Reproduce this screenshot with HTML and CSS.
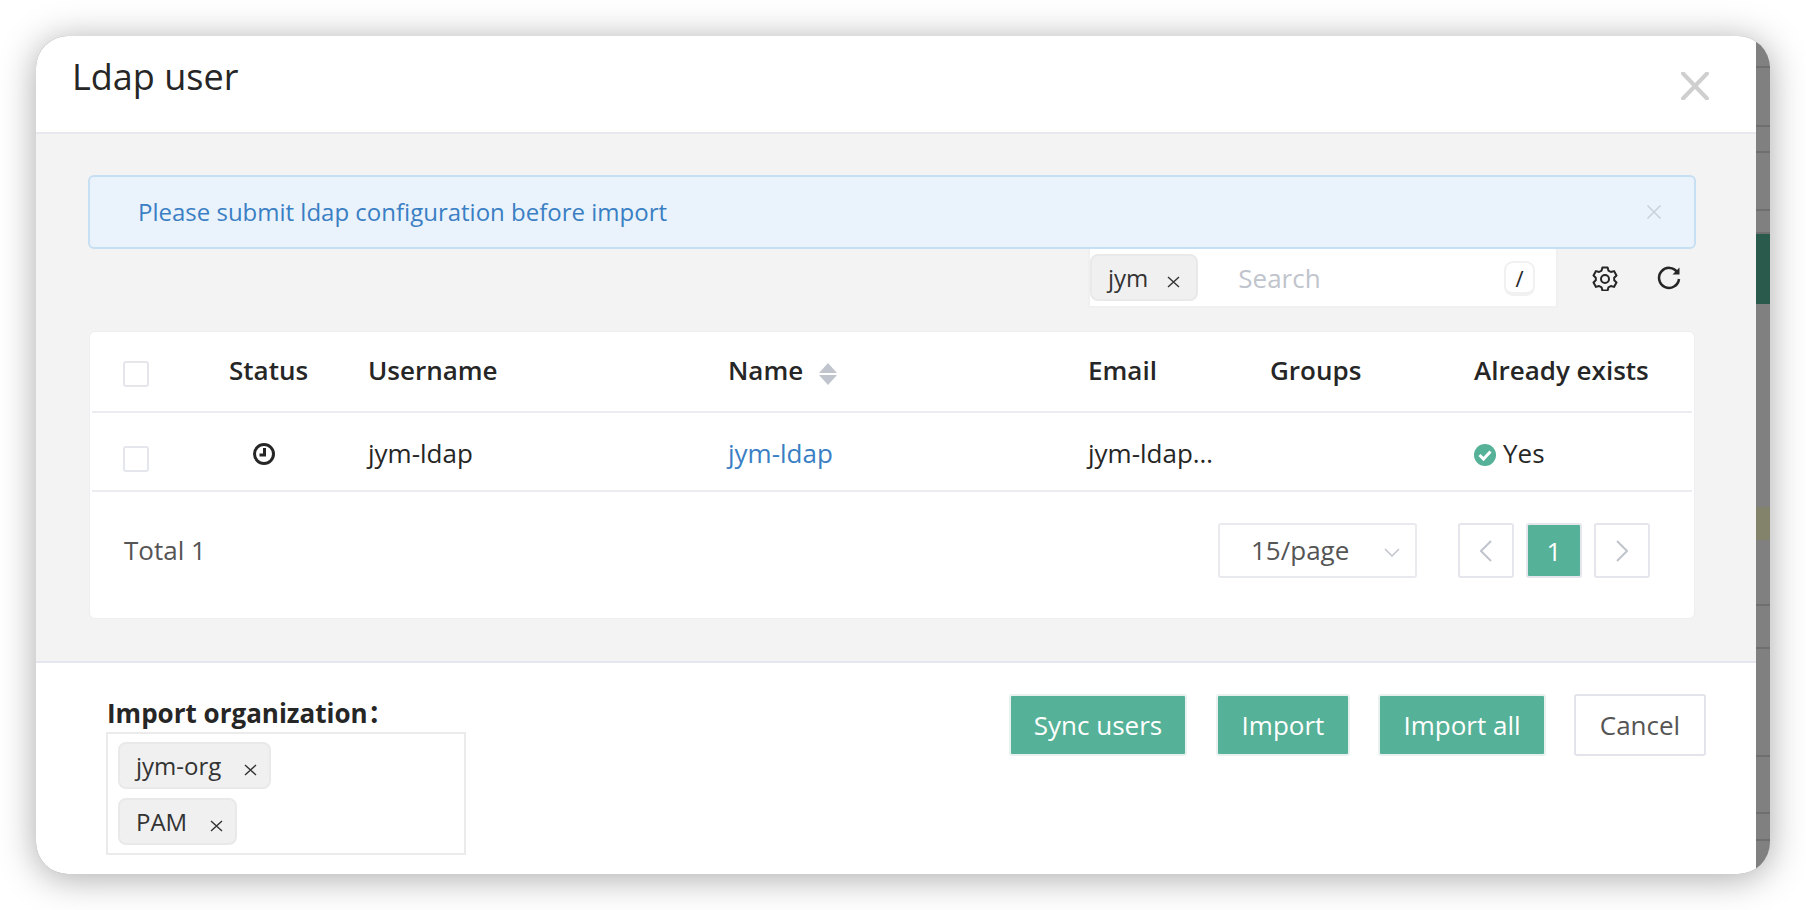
FILE: index.html
```html
<!DOCTYPE html>
<html lang="en">
<head>
    <meta charset="UTF-8">
    <title>Ldap user</title>
    <link rel="stylesheet" href="styles.css">
</head>
<body>
<div class="window">
    <div class="modal">
        <div class="modal-head">
            <h1 class="modal-title">Ldap user</h1>
            <svg class="modal-close" width="28" height="28" viewBox="0 0 28 28"><path d="M2 1.5 L26 26.5 M26 1.5 L2 26.5"/></svg>
        </div>
        <div class="modal-body">
            <div class="alert">
                <span class="alert-text">Please submit ldap configuration before import</span>
                <svg class="alert-close" width="16" height="16" viewBox="0 0 16 16"><path d="M1.500 1.500 L14.500 14.500 M14.500 1.500 L1.500 14.500"/></svg>
            </div>
            <div class="toolbar">
                <div class="search">
                    <span class="tag tag-search">jym<svg class="tag-x" width="13" height="12" viewBox="0 0 13 12"><path d="M1 1 L12 11 M12 1 L1 11"/></svg></span>
                    <span class="search-hint">Search</span>
                    <span class="search-key">/</span>
                </div>
                <!-- 设置 -->
                <svg class="tool-icon tool-gear" width="26" height="26" viewBox="0 0 26 26"><path d="M10.400 2.500 H15.600 L16.400 5.600 L18.900 7 L22 6.100 L24.500 10.500 L22.200 12.700 V15.300 L24.500 17.500 L22 21.900 L18.900 21 L16.400 22.400 L15.600 25.500 H10.400 L9.600 22.400 L7.100 21 L4 21.900 L1.500 17.500 L3.800 15.300 V12.700 L1.500 10.500 L4 6.100 L7.100 7 L9.600 5.600 Z"/><circle cx="13" cy="14" r="4"/></svg>
                <!-- 刷新 -->
                <svg class="tool-icon tool-refresh" width="26" height="26" viewBox="0 0 26 26"><path d="M21.500 7.500 A10 10 0 1 0 23 14"/><path class="arrow" d="M23.500 2.500 V9.500 H16.500 Z"/></svg>
            </div>
            <div class="card">
                <div class="table">
                    <div class="row row-head">
                        <div class="cell"><span class="checkbox"></span></div>
                        <div class="cell">Status</div>
                        <div class="cell">Username</div>
                        <div class="cell">Name
                            <svg class="sort" width="20" height="22" viewBox="0 0 20 22"><path d="M10 0 L19 10 H1 Z M1 12 H19 L10 22 Z"/></svg>
                        </div>
                        <div class="cell">Email</div>
                        <div class="cell">Groups</div>
                        <div class="cell">Already exists</div>
                    </div>
                    <div class="row row-data">
                        <div class="cell"><span class="checkbox"></span></div>
                        <div class="cell">
                            <svg class="clock" width="24" height="24" viewBox="0 0 24 24"><circle cx="12" cy="12" r="9.500"/><path d="M12.500 6 V13 H7.500"/></svg>
                        </div>
                        <div class="cell">jym-ldap</div>
                        <div class="cell"><a class="link" href="#">jym-ldap</a></div>
                        <div class="cell">jym-ldap…</div>
                        <div class="cell"></div>
                        <div class="cell">
                            <svg class="yes" width="22" height="22" viewBox="0 0 22 22"><circle cx="11" cy="11" r="11"/><path d="M5.500 11 L9.500 15 L16.500 7.500"/></svg>Yes
                        </div>
                    </div>
                </div>
                <div class="pager">
                    <span class="total">Total 1</span>
                    <div class="select">15/page
                        <svg class="chevron" width="16" height="9" viewBox="0 0 16 9"><path d="M1 1 L8 8 L15 1"/></svg>
                    </div>
                    <span class="page-btn"><svg width="12" height="22" viewBox="0 0 12 22"><path d="M11 1 L1 11 L11 21"/></svg></span>
                    <span class="page-btn page-on">1</span>
                    <span class="page-btn"><svg width="12" height="22" viewBox="0 0 12 22"><path d="M1 1 L11 11 L1 21"/></svg></span>
                </div>
            </div>
        </div>
        <div class="modal-foot">
            <div class="org">
                <div class="org-label">Import organization：</div>
                <div class="org-box">
                    <span class="tag">jym-org<svg class="tag-x" width="13" height="12" viewBox="0 0 13 12"><path d="M1 1 L12 11 M12 1 L1 11"/></svg></span>
                    <span class="tag">PAM<svg class="tag-x" width="13" height="12" viewBox="0 0 13 12"><path d="M1 1 L12 11 M12 1 L1 11"/></svg></span>
                </div>
            </div>
            <div class="actions">
                <button class="btn btn-green btn-sync">Sync users</button>
                <button class="btn btn-green btn-import">Import</button>
                <button class="btn btn-green btn-all">Import all</button>
                <button class="btn btn-cancel">Cancel</button>
            </div>
        </div>
    </div>
    <!-- 弹窗后面露出的页面 -->
    <div class="behind">
        <div class="band line b1"></div>
        <div class="band line b2"></div>
        <div class="band line b3"></div>
        <div class="band line b4"></div>
        <div class="band line b4b"></div>
        <div class="band green"></div>
        <div class="band b5"></div>
        <div class="band olive"></div>
        <div class="band line b6"></div>
        <div class="band line b7"></div>
        <div class="band line b8"></div>
        <div class="band line b9"></div>
        <div class="band line b10"></div>
    </div>
</div>
</body>
</html>
```

FILE: styles.css
```css
*{
    margin: 0;
    padding: 0;
    box-sizing: border-box;
}
body{
    width: 1806px;
    height: 910px;
    padding: 36px;
    overflow: hidden;
    background: #fff;
    font-family: "Open Sans", "Noto Sans CJK SC", "Liberation Sans", sans-serif;
    font-size: 26px;
    color: #262626;
}
/*窗口*/
.window{
    display: flex;
    width: 1734px;
    height: 838px;
    border-radius: 32px;
    overflow: hidden;
    box-shadow: 0 4px 36px rgba(0,0,0,.34);
    background: #808080;
}
.modal{
    display: flex;
    flex-direction: column;
    width: 1720px;
    background: #fff;
}
/*头部*/
.modal-head{
    display: flex;
    justify-content: space-between;
    height: 98px;
    padding: 18px 47px 0 36px;
    border-bottom: 2px solid #e7e9ee;
}
.modal-title{
    font-size: 36px;
    font-weight: 400;
    line-height: 46px;
}
.modal-close{
    margin-top: 18px;
}
.modal-close path{
    fill: none;
    stroke: #cfcfcf;
    stroke-width: 4;
    stroke-linecap: round;
}
.modal-body{
    height: 529px;
    padding: 41px 61px 0 53px;
    background: #f3f3f3;
    border-bottom: 2px solid #e4e7ee;
}
/*提示条*/
.alert{
    display: flex;
    justify-content: space-between;
    align-items: center;
    height: 74px;
    margin: 0 -1px;
    padding: 0 32px 2px 48px;
    font-size: 24px;
    background: #eaf3fb;
    border: 2px solid #c6dff3;
    border-radius: 6px;
    color: #3a7fc4;
}
.alert-close{
    margin-top: 2px;
}
.alert-close path{
    fill: none;
    stroke: #c9d0d8;
    stroke-width: 1.500;
}
/*搜索栏*/
.toolbar{
    display: flex;
    align-items: flex-start;
    margin-right: 13px;
}
.search{
    display: flex;
    align-items: center;
    width: 470px;
    height: 59px;
    margin-left: auto;
    padding: 0 21px 0 0;
    background: #fff;
    border: 2px solid #f0f0f0;
    border-top: 0;
}
.search-hint{
    margin-left: 40px;
    color: #c0c4cc;
}
.search-key{
    width: 31px;
    height: 35px;
    margin-left: auto;
    margin-top: 2px;
    text-align: center;
    font-size: 22px;
    line-height: 30px;
    background: #fff;
    border: 2px solid #f1f1f1;
    border-bottom-width: 4px;
    border-radius: 9px;
}
.tool-icon{
    margin-top: 16px;
    fill: none;
    stroke: #262626;
    stroke-width: 2;
    stroke-linejoin: round;
}
.tool-gear{
    margin-left: 34px;
}
.tool-refresh{
    margin-left: 38px;
    stroke-width: 2.500;
}
.tool-refresh .arrow{
    fill: #262626;
    stroke: none;
}
.tag{
    display: inline-flex;
    align-items: center;
    height: 47px;
    padding: 0 12px 0 16px;
    font-size: 24px;
    background: #f0f0f0;
    border: 2px solid #e9e9e9;
    border-radius: 8px;
    color: #333;
}
.tag-search{
    padding-right: 16px;
}
.tag-x{
    margin: 9px 0 0 23px;
    fill: none;
    stroke: #333;
    stroke-width: 1.400;
}
.tag-search .tag-x{
    margin-left: 19px;
}
/*表格卡片*/
.card{
    width: 1606px;
    height: 288px;
    margin-top: 23px;
    background: #fff;
    border: 1px solid #eeeef2;
    border-radius: 6px;
}
.table{
    margin: 0 2px;
}
.row{
    display: grid;
    grid-template-columns: 137px 139px 360px 360px 182px 204px 218px;
    align-items: center;
    border-bottom: 2px solid #ececf0;
}
.row-head{
    height: 81px;
    padding-bottom: 3px;
    font-weight: 600;
}
.row-data{
    height: 79px;
}
.row-data .cell{
    padding-top: 2px;
}
.cell{
    white-space: nowrap;
}
.checkbox{
    display: block;
    width: 26px;
    height: 26px;
    margin-left: 31px;
    background: #fff;
    border: 2px solid #e4e6ec;
    border-radius: 3px;
}
.row-head .checkbox{
    margin-top: 7px;
}
.row-data .checkbox{
    margin-top: 12px;
}
.sort{
    margin-left: 8px;
    vertical-align: -5px;
    fill: #c0c4cc;
}
.clock{
    display: block;
    margin: 3px 0 0 23px;
    fill: none;
    stroke: #262626;
    stroke-width: 3;
}
.link{
    color: #3a7fc4;
    text-decoration: none;
}
.yes{
    margin-right: 7px;
    vertical-align: -3px;
}
.yes circle{
    fill: #55b197;
}
.yes path{
    fill: none;
    stroke: #fff;
    stroke-width: 3;
}
/*分页*/
.pager{
    display: flex;
    align-items: center;
    height: 55px;
    margin-top: 31px;
    padding: 0 44px 0 34px;
    color: #555;
}
.total{
    margin-right: auto;
    padding-bottom: 2px;
}
.select{
    display: flex;
    align-items: center;
    justify-content: space-between;
    width: 199px;
    height: 55px;
    margin-right: 41px;
    padding: 0 15px 2px 31px;
    border: 2px solid #e9eaee;
    border-radius: 3px;
}
.chevron{
    margin-top: 6px;
    fill: none;
    stroke: #c0c4cc;
    stroke-width: 1.500;
}
.page-btn{
    display: flex;
    align-items: center;
    justify-content: center;
    width: 56px;
    height: 55px;
    margin-left: 12px;
    border: 2px solid #e4e6ec;
    border-radius: 3px;
}
.page-btn:nth-child(3){
    margin-left: 0;
}
.page-btn svg{
    fill: none;
    stroke: #c0c4cc;
    stroke-width: 2;
}
.page-on{
    background: #55b197;
    color: #fff;
}
/*底部*/
.modal-foot{
    display: flex;
    justify-content: space-between;
    flex: 1;
    padding: 31px 50px 0 70px;
}
.org-label{
    height: 38px;
    padding-left: 1px;
    font-weight: 700;
    line-height: 38px;
}
.org-box{
    display: flex;
    flex-direction: column;
    align-items: flex-start;
    gap: 9px;
    width: 360px;
    height: 123px;
    padding: 8px 10px;
    border: 2px solid #ebebeb;
}
.actions{
    display: flex;
    align-items: flex-start;
}
.btn{
    height: 62px;
    font-family: inherit;
    font-size: 26px;
    border-radius: 3px;
}
.btn-green{
    color: #fff;
    background: #55b197;
    border: 2px solid #e9f1ef;
}
.btn-sync{
    width: 178px;
}
.btn-import{
    width: 134px;
    margin-left: 29px;
}
.btn-all{
    width: 168px;
    margin-left: 28px;
}
.btn-cancel{
    width: 132px;
    margin-left: 28px;
    color: #555;
    background: #fff;
    border: 2px solid #e2e4ea;
}
/*背后的页面*/
.behind{
    display: flex;
    flex-direction: column;
    flex: 1;
}
.band{
    flex: none;
}
.line{
    border-bottom: 2px solid #6f6f6f;
}
.b1{ height: 32px; }
.b2{ height: 59px; }
.b3{ height: 26px; }
.b4{ height: 58px; }
.b4b{ height: 23px; }
.green{ height: 70px; background: #2a5a4b; }
.b5{ height: 203px; }
.olive{ height: 33px; background: #83826a; }
.b6{ height: 66px; }
.b7{ height: 43px; }
.b8{ height: 108px; }
.b9{ height: 57px; }
.b10{ height: 27px; }
```
